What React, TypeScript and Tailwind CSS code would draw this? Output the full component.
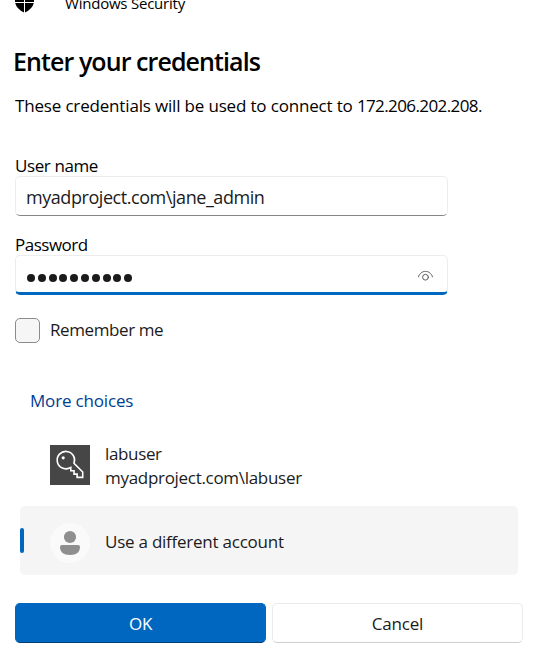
import React from "react";

function ShieldIcon() {
  return (
    <svg width="21" height="24" viewBox="0 0 21 24" className="block" fill="#000">
      <path d="M1 4 Q6 4 10 1 V13 H1 Z M11 1 Q15 4 20 4 V13 H11 Z M1.2 14 H10 V23.4 Q2.6 20 1.2 14 Z M11 14 H19.8 Q18.4 20 11 23.4 Z" />
    </svg>
  );
}

function EyeIcon() {
  return (
    <svg width="16" height="12" viewBox="0 0 16 12" className="block" fill="none" stroke="#5c5c5c" strokeWidth="1" strokeLinecap="round">
      <path d="M.5 6.8 C1.7 3.2 4.3 1.4 7.5 1.4 S13.3 3.2 14.5 6.8" />
      <circle cx="7.5" cy="7.2" r="2.9" />
    </svg>
  );
}

function KeyIcon() {
  return (
    <svg width="40" height="40" viewBox="0 0 40 40" className="block shrink-0 bg-[#464646]" fill="none" stroke="#fff" strokeWidth="1.6">
      <path d="M24 18.2 A8.7 8.7 0 1 0 19.5 23 L20.8 22.4 V25.8 H24 V29.1 H27.1 V32.4 H32.7 V27 Z" />
      <circle cx="13.2" cy="12.8" r="1.6" fill="#fff" stroke="none" />
    </svg>
  );
}

function PersonIcon() {
  return (
    <svg width="40" height="40" viewBox="0 0 40 40" className="block shrink-0" fill="#8f8f8f">
      <circle cx="20" cy="20" r="20" fill="#fafafa" />
      <circle cx="20" cy="14" r="6.1" />
      <path d="M12 22 H28 Q30 22 30 24 C30 29 26.5 32 20 32 S10 29 10 24 Q10 22 12 22 Z" />
    </svg>
  );
}

export default function App() {
  return (
    <div className="h-[657px] w-[535px] overflow-hidden bg-white font-['Open_Sans','Noto_Sans',sans-serif] text-[17px] leading-6 whitespace-nowrap text-[#1b1b1b]">
      <header className="flex h-[45px] items-start overflow-hidden pl-[14px] text-black">
        <div className="-mt-[11px] w-[51px]"><ShieldIcon /></div>
        <span className="-mt-[7px] text-[15px] leading-5 tracking-[-0.22px]">Windows Security</span>
      </header>
      <main className="px-[15px]">
        <h1 className="-ml-[2px] text-[25px] leading-8 font-semibold tracking-[-0.92px] text-black">Enter your credentials</h1>
        <p className="mt-[17px] tracking-[-0.17px] text-black">
          These credentials will be used to connect to <span className="tracking-[-0.6px]">172.206.202.208.</span>
        </p>

        <label className="mt-9 block pt-px leading-[21px] tracking-[-0.4px] text-black">User name</label>
        <div className="flex h-10 w-[433px] items-center rounded-[5px] border border-[#ededed] border-b-[#868686] pt-[2px] pl-[10px]">
          <span className="text-[18px] tracking-[-0.44px]">myadproject.com\jane_admin</span>
        </div>

        <label className="mt-[17px] block pt-px leading-[21px] tracking-[-0.5px] text-black">Password</label>
        <div className="flex h-10 w-[433px] items-center justify-between overflow-hidden rounded-[5px] border border-b-[3px] border-[#ededed] border-b-[#0067c0] pt-[7px] pr-[13px] pl-[11px]">
          <div className="flex gap-[2.8px]">
            {Array.from({ length: 10 }, (_, i) => (
              <span key={i} className="size-2 rounded-full bg-[#1b1b1b]" />
            ))}
          </div>
          <div className="-mt-1"><EyeIcon /></div>
        </div>

        <div className="mt-[23px] flex h-[25px] items-start">
          <span className="size-[25px] rounded-[5px] border border-[#8b8b8b] bg-[#f6f6f6]" />
          <span className="ml-[10px] tracking-[-0.4px]">Remember me</span>
        </div>

        <div className="mt-[46px] pl-[15px] tracking-[-0.17px] text-[#003e92]">More choices</div>

        <div className="mt-[29px] flex h-12 items-start pl-[35px]">
          <div className="pt-[3px]"><KeyIcon /></div>
          <div className="ml-[15px]">
            <div className="tracking-[-0.35px]">labuser</div>
            <div className="tracking-[-0.3px]">myadproject.com\labuser</div>
          </div>
        </div>

        <div className="mt-4 ml-[5px] flex h-[69px] w-[498px] items-center rounded-[5px] bg-[#f5f5f5]">
          <span className="h-[25px] w-1 rounded-[2px] bg-[#0067c0]" />
          <div className="mt-[5px] ml-[26px] flex items-center">
            <PersonIcon />
            <span className="-mt-[2px] ml-[15px] tracking-[-0.24px]">Use a different account</span>
          </div>
        </div>

        <div className="mt-7 flex gap-[6px]">
          <button className="h-10 w-[251px] shrink-0 rounded-[5px] border border-[#0067c0] border-b-[#003e73] bg-[#0067c0] pt-[2px] tracking-[-0.3px] text-white">OK</button>
          <button className="h-10 w-[251px] shrink-0 rounded-[5px] border border-[#ebebeb] border-b-[#cfcfcf] bg-white pt-[2px] tracking-[-0.2px]">Cancel</button>
        </div>
      </main>
    </div>
  );
}
